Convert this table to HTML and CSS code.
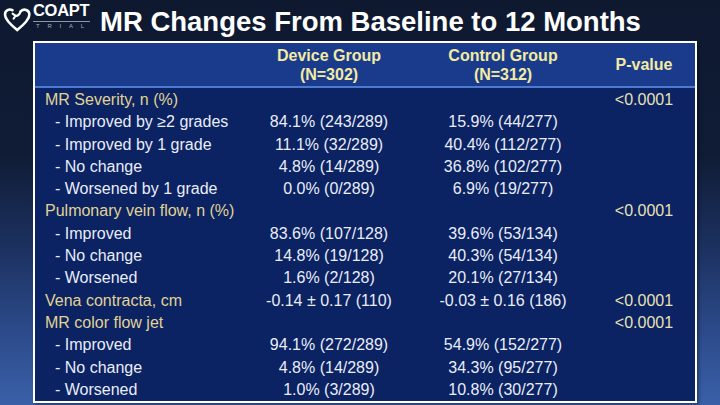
FILE: index.html
```html
<!DOCTYPE html>
<html>
<head>
<meta charset="utf-8">
<link rel="stylesheet" href="styles.css">
</head>
<body>
<div class="slide">
  <header class="top">
    <div class="logo">
      <svg class="heart" width="30" height="28" viewBox="0 0 30 28">
        <path d="M10.5 6.2 C7 4.6 3.2 6.2 3 10.4 C2.8 15.4 9 21 15.2 26 C21.4 21 27.6 15.4 27.4 10.4 C27.2 5.6 22 4.2 18.6 7.4" fill="none" stroke="#ffffff" stroke-width="2.6" stroke-linecap="round"/>
        <path d="M18.6 7.4 C17.8 10.4 15.6 12.4 13.4 11.8" fill="none" stroke="#ffffff" stroke-width="2.2" stroke-linecap="round"/>
        <path d="M10.6 9.6 L13.6 11.9 L11.6 14.6" fill="none" stroke="#ffffff" stroke-width="2" stroke-linecap="round" stroke-linejoin="round"/>
      </svg>
      <div class="brand">
        <div class="brand-name">COAPT</div>
        <div class="brand-sub"><span>T</span><span>R</span><span>I</span><span>A</span><span>L</span></div>
      </div>
    </div>
    <h1 class="title">MR Changes From Baseline to 12 Months</h1>
  </header>

  <table class="data">
    <colgroup>
      <col class="c-label"><col class="c-dev"><col class="c-ctl"><col class="c-p">
    </colgroup>
    <thead>
      <tr>
        <th></th>
        <th>Device Group<br>(N=302)</th>
        <th>Control Group<br>(N=312)</th>
        <th>P-value</th>
      </tr>
    </thead>
    <tbody>
      <tr><td class="cat">MR Severity, n (%)</td><td></td><td></td><td class="p">&lt;0.0001</td></tr>
      <tr><td class="sub">- Improved by ≥2 grades</td><td>84.1% (243/289)</td><td>15.9% (44/277)</td><td></td></tr>
      <tr><td class="sub">- Improved by 1 grade</td><td>11.1% (32/289)</td><td>40.4% (112/277)</td><td></td></tr>
      <tr><td class="sub">- No change</td><td>4.8% (14/289)</td><td>36.8% (102/277)</td><td></td></tr>
      <tr><td class="sub">- Worsened by 1 grade</td><td>0.0% (0/289)</td><td>6.9% (19/277)</td><td></td></tr>
      <tr><td class="cat">Pulmonary vein flow, n (%)</td><td></td><td></td><td class="p">&lt;0.0001</td></tr>
      <tr><td class="sub">- Improved</td><td>83.6% (107/128)</td><td>39.6% (53/134)</td><td></td></tr>
      <tr><td class="sub">- No change</td><td>14.8% (19/128)</td><td>40.3% (54/134)</td><td></td></tr>
      <tr><td class="sub">- Worsened</td><td>1.6% (2/128)</td><td>20.1% (27/134)</td><td></td></tr>
      <tr><td class="cat">Vena contracta, cm</td><td>-0.14 ± 0.17 (110)</td><td>-0.03 ± 0.16 (186)</td><td class="p">&lt;0.0001</td></tr>
      <tr><td class="cat">MR color flow jet</td><td></td><td></td><td class="p">&lt;0.0001</td></tr>
      <tr><td class="sub">- Improved</td><td>94.1% (272/289)</td><td>54.9% (152/277)</td><td></td></tr>
      <tr><td class="sub">- No change</td><td>4.8% (14/289)</td><td>34.3% (95/277)</td><td></td></tr>
      <tr><td class="sub">- Worsened</td><td>1.0% (3/289)</td><td>10.8% (30/277)</td><td></td></tr>
    </tbody>
  </table>
</div>
</body>
</html>
```

FILE: styles.css
```css
html, body {
  margin: 0;
  padding: 0;
}
body {
  width: 720px;
  height: 405px;
  overflow: hidden;
  font-family: "Liberation Sans", Arial, sans-serif;
}
.slide {
  width: 720px;
  height: 405px;
  background: linear-gradient(to bottom, #0e1930 0%, #101c36 38%, #1d3262 62%, #2e4d8e 84%, #3a60a8 100%);
  overflow: hidden;
}
.top {
  height: 41px;
  display: flex;
  align-items: flex-start;
}
.logo {
  display: flex;
  align-items: flex-start;
  padding: 2px 0 0 2px;
  width: 96px;
  flex: none;
}
.heart {
  margin-top: 2px;
  flex: none;
}
.brand {
  display: flex;
  flex-direction: column;
  margin-left: 1px;
  width: 57px;
}
.brand-name {
  color: #ffffff;
  font-weight: bold;
  font-size: 16.5px;
  line-height: 17px;
  letter-spacing: -0.3px;
  padding-bottom: 2px;
  border-bottom: 1px solid #8c96a8;
}
.brand-sub {
  display: flex;
  justify-content: space-between;
  color: #a4adbd;
  font-size: 6px;
  line-height: 8px;
  padding: 0 6px 0 3px;
}
.title {
  margin: 7px 0 0 2px;
  color: #ffffff;
  font-weight: bold;
  font-size: 27.5px;
  line-height: 30px;
  white-space: nowrap;
}
.data {
  margin-left: 33px;
  border-collapse: separate;
  border-spacing: 0;
  border: 2px solid #ffffff;
  background: #0b2263;
  table-layout: fixed;
  width: 664px;
  box-shadow: 2px 2px 3px rgba(0, 0, 0, 0.35);
}
.c-label { width: 210px; }
.c-dev { width: 168px; }
.c-ctl { width: 180px; }
.c-p { width: 102px; }
.data th {
  background: #1a3b8b;
  color: #f3eaa4;
  font-weight: bold;
  font-size: 16px;
  line-height: 19px;
  height: 41px;
  padding: 1px 0 1px;
  border-bottom: 2px solid #4c7ad0;
  text-align: center;
  vertical-align: middle;
}
.data td {
  color: #e9edf7;
  font-size: 16px;
  line-height: 22.3px;
  height: 22.3px;
  padding: 0;
  text-align: center;
  white-space: nowrap;
}
.data tbody tr:first-child td {
  padding-top: 1px;
}
.data td.cat {
  color: #e0d394;
  text-align: left;
  padding-left: 10px;
}
.data td.sub {
  text-align: left;
  padding-left: 20px;
}
.data td.p {
  color: #e8e1b4;
}
```
